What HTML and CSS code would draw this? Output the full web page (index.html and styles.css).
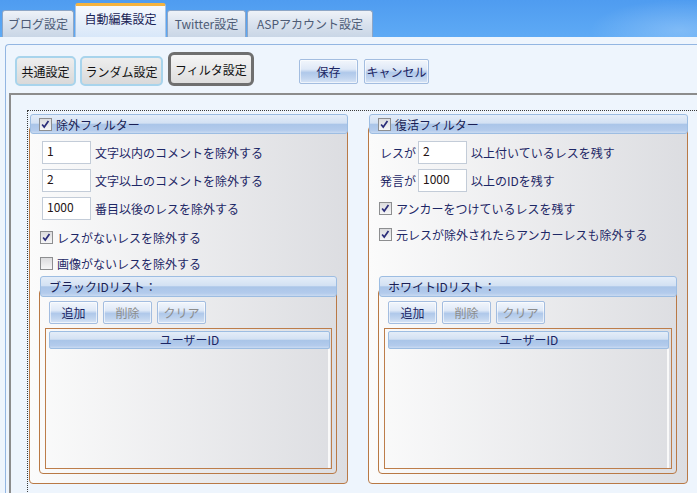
FILE: index.html
```html
<!DOCTYPE html>
<html lang="ja">
<head>
<meta charset="utf-8">
<link rel="stylesheet" href="styles.css">
</head>
<body>
<div class="tabbar">
  <div class="tab t1">ブログ設定</div>
  <div class="tab active">自動編集設定</div>
  <div class="tab t3">Twitter設定</div>
  <div class="tab t4">ASPアカウント設定</div>
</div>
<div class="page">
  <div class="toolbar">
    <div class="seg w1">共通設定</div>
    <div class="seg w2">ランダム設定</div>
    <div class="seg on">フィルタ設定</div>
    <div class="act save">保存</div>
    <div class="act cancel">キャンセル</div>
  </div>
  <div class="inner">
    <div class="dotted">
      <div class="groups">
        <div class="group">
          <div class="ghead"><span class="cb"><svg viewBox="0 0 13 13" width="11" height="11"><path d="M2.5 6.5 L5 9.5 L10 2.5" fill="none" stroke="#2b2d7a" stroke-width="2"/></svg></span><span>除外フィルター</span></div>
          <div class="gbox">
            <div class="row lrow"><div class="num">1</div><span class="lbl">文字以内のコメントを除外する</span></div>
            <div class="row lrow"><div class="num">2</div><span class="lbl">文字以上のコメントを除外する</span></div>
            <div class="row lrow"><div class="num">1000</div><span class="lbl">番目以後のレスを除外する</span></div>
            <div class="crow first"><span class="cb"><svg viewBox="0 0 13 13" width="11" height="11"><path d="M2.5 6.5 L5 9.5 L10 2.5" fill="none" stroke="#2b2d7a" stroke-width="2"/></svg></span><span class="lbl">レスがないレスを除外する</span></div>
            <div class="crow"><span class="cb"></span><span class="lbl">画像がないレスを除外する</span></div>
            <div class="idgroup">
              <div class="ihead">ブラックIDリスト：</div>
              <div class="ibox">
                <div class="btns">
                  <div class="btn">追加</div>
                  <div class="btn dis">削除</div>
                  <div class="btn dis">クリア</div>
                </div>
                <div class="list">
                  <div class="lhead">ユーザーID</div>
                  <div class="lcol"></div>
                </div>
              </div>
            </div>
          </div>
        </div>
        <div class="group r">
          <div class="ghead"><span class="cb"><svg viewBox="0 0 13 13" width="11" height="11"><path d="M2.5 6.5 L5 9.5 L10 2.5" fill="none" stroke="#2b2d7a" stroke-width="2"/></svg></span><span>復活フィルター</span></div>
          <div class="gbox">
            <div class="row rrow"><span class="pre">レスが</span><div class="num">2</div><span class="lbl">以上付いているレスを残す</span></div>
            <div class="row rrow"><span class="pre">発言が</span><div class="num">1000</div><span class="lbl">以上のIDを残す</span></div>
            <div class="crow first"><span class="cb"><svg viewBox="0 0 13 13" width="11" height="11"><path d="M2.5 6.5 L5 9.5 L10 2.5" fill="none" stroke="#2b2d7a" stroke-width="2"/></svg></span><span class="lbl">アンカーをつけているレスを残す</span></div>
            <div class="crow"><span class="cb"><svg viewBox="0 0 13 13" width="11" height="11"><path d="M2.5 6.5 L5 9.5 L10 2.5" fill="none" stroke="#2b2d7a" stroke-width="2"/></svg></span><span class="lbl">元レスが除外されたらアンカーレスも除外する</span></div>
            <div class="idgroup">
              <div class="ihead">ホワイトIDリスト：</div>
              <div class="ibox">
                <div class="btns">
                  <div class="btn">追加</div>
                  <div class="btn dis">削除</div>
                  <div class="btn dis">クリア</div>
                </div>
                <div class="list">
                  <div class="lhead">ユーザーID</div>
                  <div class="lcol"></div>
                </div>
              </div>
            </div>
          </div>
        </div>
      </div>
    </div>
  </div>
</div>
</body>
</html>
```
FILE: styles.css
```css
* { box-sizing: border-box; }
html, body { margin: 0; padding: 0; overflow: hidden; }
html { background: #eef5fd; }
body {
  height: 493px;
  background: #eef5fd;
  font-family: "Noto Sans CJK JP", sans-serif;
  font-size: 12px;
  color: #1d2766;
}

/* tabs */
.tabbar {
  height: 37px;
  background:
    radial-gradient(ellipse 90px 30px at 680px 30px, rgba(255,255,255,0.22), rgba(255,255,255,0)),
    linear-gradient(#4f9cf0, #5eaaf5);
  display: flex;
  align-items: flex-end;
  padding-left: 2px;
  gap: 1px;
}
.tab {
  height: 27px;
  border: 1px solid #8ea6c6;
  border-bottom: none;
  border-radius: 3px 3px 0 0;
  background: linear-gradient(#eef2f8, #d9e2ee 50%, #c9d6e6);
  color: #4d5b75;
  line-height: 26px;
  text-align: center;
}
.t1 { width: 72px; }
.t3 { width: 79px; }
.t4 { width: 126px; }
.tab.active {
  width: 91px;
  height: 34px;
  border: 1px solid #a9c3e2;
  border-top: 3px solid #f5b33f;
  border-bottom: none;
  background: linear-gradient(#f6f9fe, #e4eefa 60%, #d8e7f9);
  color: #1a2456;
  line-height: 26px;
  padding-bottom: 4px;
}

/* page */
.page {
  margin: 7px 0 0 5px;
  height: 449px;
  border-top: 1px solid #93b6e2;
  border-left: 1px solid #93b6e2;
  border-radius: 4px 0 0 0;
  padding-left: 3px;
}
.toolbar {
  height: 48px;
  display: flex;
  align-items: flex-start;
  padding: 7px 0 0 6px;
}
.seg {
  height: 30px;
  margin-top: 4px;
  border: 2px solid #a8d4ec;
  border-radius: 5px;
  background: linear-gradient(#eeeeee, #d9d9d9);
  color: #111;
  display: flex;
  align-items: center;
  justify-content: center;
}
.w1 { width: 61px; margin-right: 4px; }
.w2 { width: 83px; margin-right: 5px; }
.seg.on {
  width: 86px;
  height: 34px;
  margin-top: 0;
  border: 3px solid #6f6f6f;
  border-radius: 6px;
  background: linear-gradient(#f5f5f5, #dedede);
  margin-right: 45px;
}
.act, .btn {
  height: 25px;
  border: 1px solid #a3bde0;
  border-radius: 2px;
  background: linear-gradient(#f2f6fc 0%, #dfe9f7 40%, #afc8ea 55%, #c2d5ef 80%, #d8e5f6 100%);
  box-shadow: inset 0 0 0 1px rgba(255,255,255,0.6);
  color: #1b2563;
  display: flex;
  align-items: center;
  justify-content: center;
  margin-top: 7px;
}
.save { width: 59px; margin-right: 6px; }
.cancel { width: 65px; }

.inner {
  height: 400px;
  border-top: 2px solid #8c8c8c;
  border-left: 2px solid #8c8c8c;
  padding: 15px 0 0 16px;
}
.dotted {
  width: 690px;
  height: 400px;
  border: 1px dotted #3a3a3a;
  border-right: none;
}
.groups {
  display: flex;
  gap: 20px;
  padding: 3px 0 0 1px;
}
.group { width: 319px; display: flex; flex-direction: column; }
.group.r { width: 320px; }

.ghead, .ihead, .lhead {
  border: 1px solid #9dbde2;
  border-radius: 3px;
  background: linear-gradient(#e4edf8 0%, #d3e1f3 45%, #aac5e8 52%, #b3cbec 85%, #c9daf1 100%);
  color: #1a1f55;
}
.ghead {
  position: relative;
  z-index: 1;
  height: 20px;
  margin-left: 1px;
  display: flex;
  align-items: center;
  gap: 4px;
  padding-left: 8px;
}
.gbox {
  margin-top: -8px;
  height: 358px;
  border: 1px solid #b97945;
  border-radius: 4px;
  background: linear-gradient(to right, #fbfbfb, #dcdde1);
  display: flex;
  flex-direction: column;
  padding-top: 14px;
}

.cb {
  width: 13px;
  height: 13px;
  flex: none;
  border: 1px solid #8d8e90;
  background: linear-gradient(#dcdcde, #f6f6f7);
  display: flex;
  align-items: center;
  justify-content: center;
}
.row {
  height: 23px;
  margin-bottom: 5px;
  display: flex;
  align-items: center;
}
.lrow { padding-left: 12px; }
.rrow { padding-left: 11px; }
.pre { width: 38px; }
.num {
  width: 49px;
  height: 23px;
  border: 1px solid #c3ccd8;
  background: #fff;
  color: #241414;
  padding: 2px 0 0 4px;
  line-height: 14px;
  margin-right: 4px;
}
.crow {
  height: 20px;
  margin-top: 6px;
  display: flex;
  align-items: center;
  gap: 4px;
  padding-left: 10px;
}
.group .crow.first { margin-top: 2px; }
.group.r .crow.first { margin-top: 1px; }

.idgroup {
  margin: auto 10px 9px 9px;
  display: flex;
  flex-direction: column;
}
.ihead {
  position: relative;
  z-index: 1;
  height: 21px;
  line-height: 19px;
  padding-left: 8px;
  margin-left: 1px;
}
.ibox {
  margin-top: -8px;
  height: 185px;
  border: 1px solid #b97945;
  border-radius: 4px;
  padding: 11px 4px 4px 5px;
  display: flex;
  flex-direction: column;
}
.btns {
  display: flex;
  gap: 5px;
  padding-left: 4px;
}
.btn {
  width: 49px;
  height: 23px;
  margin-top: 0;
}
.btn.dis { color: #8c8c8c; }
.list {
  margin-top: 4px;
  flex: 1;
  border: 1px solid #bd7d4a;
  padding: 2px 0 0 3px;
  display: flex;
  flex-direction: column;
}
.lhead {
  width: 281px;
  height: 18px;
  line-height: 16px;
  text-align: center;
  border-radius: 2px;
  color: #1b2563;
}
.lcol {
  width: 281px;
  flex: 1;
  border-right: 2px solid #f9f9f9;
}
```
